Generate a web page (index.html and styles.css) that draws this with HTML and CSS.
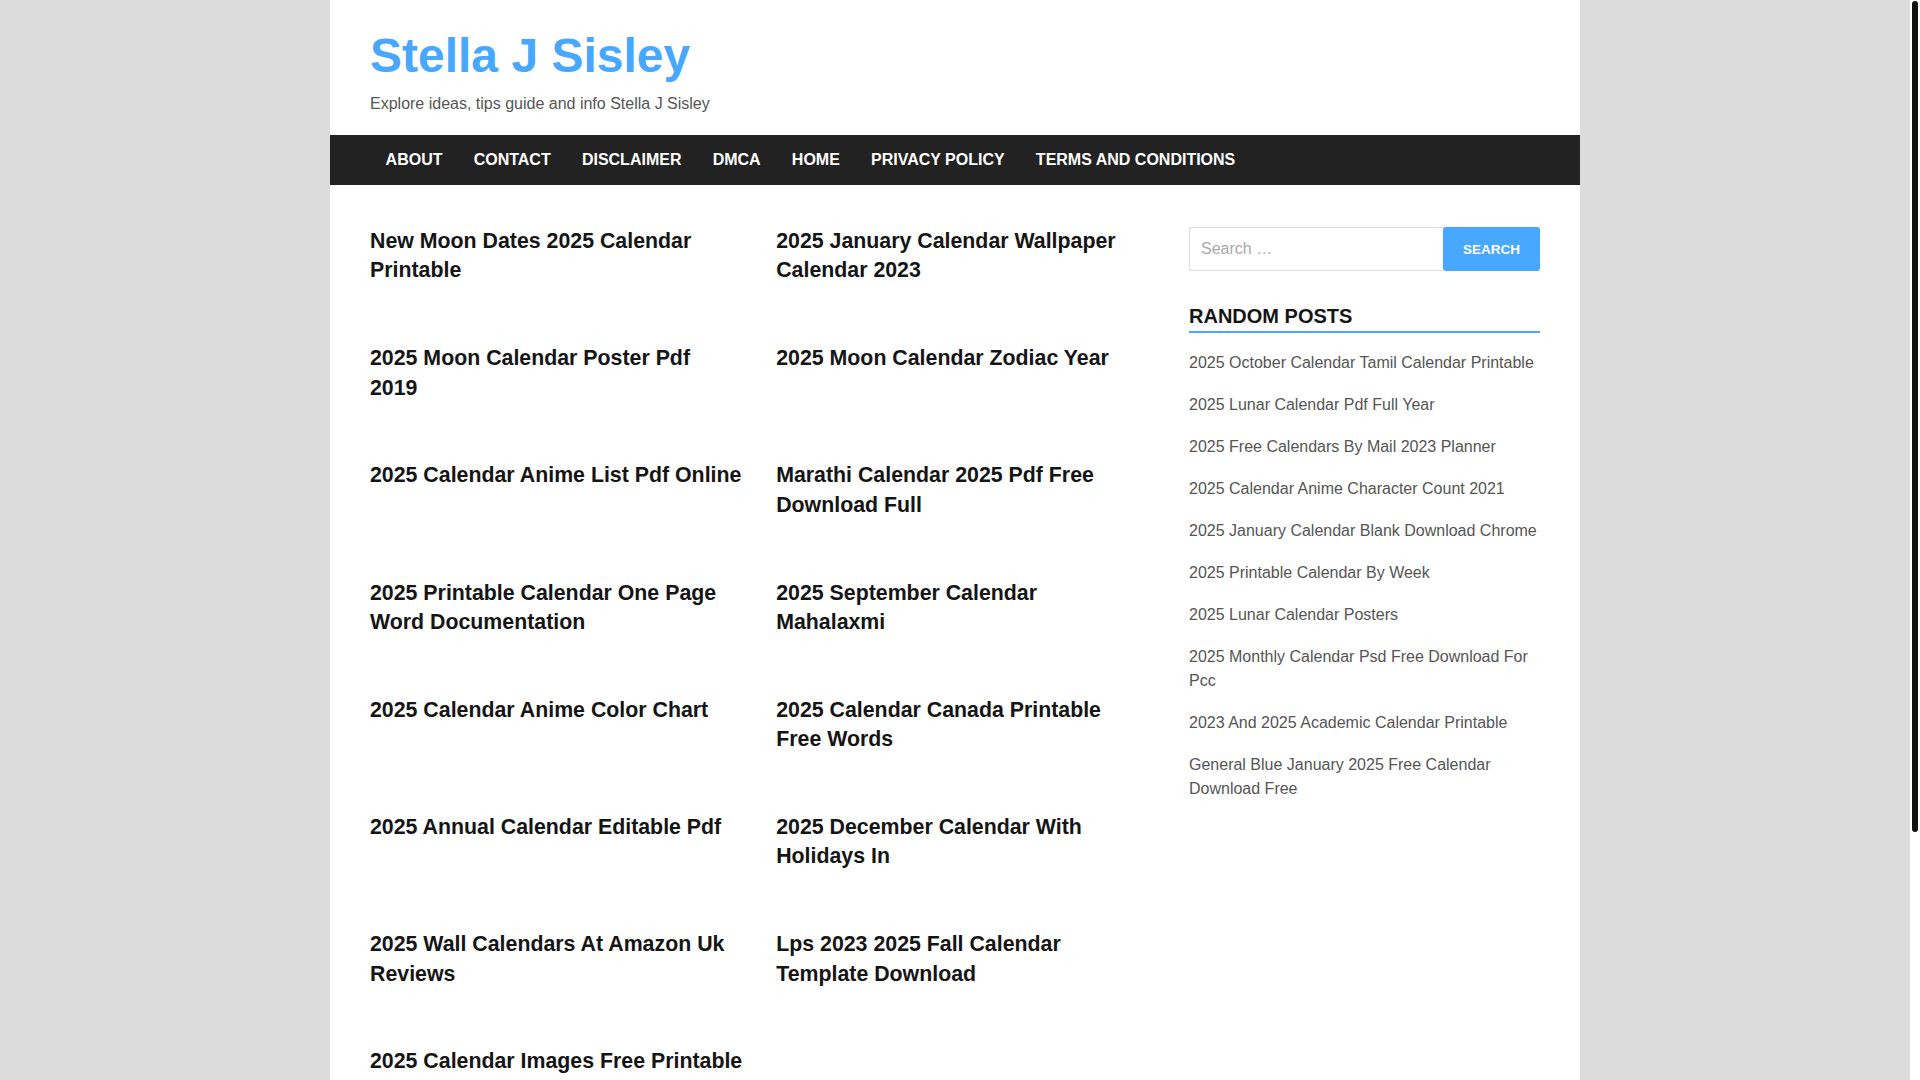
FILE: index.html
```html
<!DOCTYPE html>
<html lang="en">
<head>
<meta charset="utf-8">
<title>Stella J Sisley</title>
<link rel="stylesheet" href="styles.css">
</head>
<body>
<div class="site">
  <header class="site-header">
    <h1 class="site-title">Stella J Sisley</h1>
    <p class="site-desc">Explore ideas, tips guide and info Stella J Sisley</p>
  </header>
  <nav class="main-nav">
    <ul>
      <li><a href="#">About</a></li>
      <li><a href="#">Contact</a></li>
      <li><a href="#">Disclaimer</a></li>
      <li><a href="#">DMCA</a></li>
      <li><a href="#">Home</a></li>
      <li><a href="#">Privacy Policy</a></li>
      <li><a href="#">Terms and Conditions</a></li>
    </ul>
  </nav>
  <div class="content">
    <main class="posts">
      <h2 class="post-title">New Moon Dates 2025 Calendar Printable</h2>
      <h2 class="post-title">2025 January Calendar Wallpaper Calendar 2023</h2>
      <h2 class="post-title">2025 Moon Calendar Poster Pdf 2019</h2>
      <h2 class="post-title">2025 Moon Calendar Zodiac Year</h2>
      <h2 class="post-title">2025 Calendar Anime List Pdf Online</h2>
      <h2 class="post-title">Marathi Calendar 2025 Pdf Free Download Full</h2>
      <h2 class="post-title">2025 Printable Calendar One Page Word Documentation</h2>
      <h2 class="post-title">2025 September Calendar Mahalaxmi</h2>
      <h2 class="post-title">2025 Calendar Anime Color Chart</h2>
      <h2 class="post-title">2025 Calendar Canada Printable Free Words</h2>
      <h2 class="post-title">2025 Annual Calendar Editable Pdf</h2>
      <h2 class="post-title">2025 December Calendar With Holidays In</h2>
      <h2 class="post-title">2025 Wall Calendars At Amazon Uk Reviews</h2>
      <h2 class="post-title">Lps 2023 2025 Fall Calendar Template Download</h2>
      <h2 class="post-title">2025 Calendar Images Free Printable</h2>
    </main>
    <aside class="sidebar">
      <form class="search-form">
        <input class="search-field" type="search" placeholder="Search …">
        <button class="search-submit" type="button">Search</button>
      </form>
      <h3 class="widget-title">Random Posts</h3>
      <ul class="random-list">
        <li><a href="#">2025 October Calendar Tamil Calendar Printable</a></li>
        <li><a href="#">2025 Lunar Calendar Pdf Full Year</a></li>
        <li><a href="#">2025 Free Calendars By Mail 2023 Planner</a></li>
        <li><a href="#">2025 Calendar Anime Character Count 2021</a></li>
        <li><a href="#">2025 January Calendar Blank Download Chrome</a></li>
        <li><a href="#">2025 Printable Calendar By Week</a></li>
        <li><a href="#">2025 Lunar Calendar Posters</a></li>
        <li><a href="#">2025 Monthly Calendar Psd Free Download For Pcc</a></li>
        <li><a href="#">2023 And 2025 Academic Calendar Printable</a></li>
        <li><a href="#">General Blue January 2025 Free Calendar Download Free</a></li>
      </ul>
    </aside>
  </div>
  <footer class="site-footer">
    <p>Copyright © 2025 Stella J Sisley</p>
  </footer>
</div>
<div class="scroll-track"><div class="scroll-thumb"></div></div>
</body>
</html>
```

FILE: styles.css
```css
body {
  margin: 0;
  padding-right: 10px;
  background: #dcdcdc;
  font-family: "Liberation Sans", Arial, sans-serif;
  color: #222;
}
.scroll-track {
  position: fixed;
  top: 0;
  right: 0;
  width: 10px;
  height: 100vh;
  background: #fff;
}
.scroll-thumb {
  margin: 1px 2px 0;
  width: 6px;
  height: 831px;
  border-radius: 3px;
  background: #111;
}
.site {
  width: 1250px;
  margin: 0 auto;
  background: #fff;
}
.site-header {
  padding: 27px 40px 19px;
}
.site-title {
  margin: 0 0 7px;
  font-size: 48px;
  line-height: 58px;
  font-weight: 700;
  color: #48a8ff;
}
.site-desc {
  margin: 0;
  font-size: 16px;
  line-height: 24px;
  color: #555;
}
.main-nav {
  background: #222;
  padding: 0 40px;
}
.main-nav ul {
  display: flex;
  list-style: none;
  margin: 0;
  padding: 0;
}
.main-nav a {
  display: block;
  padding: 0 15.6px;
  line-height: 50px;
  font-size: 16px;
  font-weight: 700;
  text-transform: uppercase;
  color: #fff;
  text-decoration: none;
}
.content {
  display: grid;
  grid-template-columns: 1fr 351px;
  column-gap: 40px;
  padding: 42px 40px 120px;
}
.posts {
  display: grid;
  grid-template-columns: 372.8px 372.8px;
  column-gap: 33.4px;
  row-gap: 58.4px;
  align-content: start;
}
.post-title {
  margin: 0;
  font-size: 21.33px;
  line-height: 29.4px;
  font-weight: 700;
  color: #151515;
}
.search-form {
  display: flex;
  height: 44px;
}
.search-field {
  flex: 1;
  min-width: 0;
  box-sizing: border-box;
  height: 44px;
  margin: 0;
  padding: 0 11px;
  border: 1px solid #ddd;
  border-right: none;
  border-radius: 3px 0 0 3px;
  font-family: "Liberation Sans", Arial, sans-serif;
  font-size: 16px;
  color: #555;
}
.search-field::placeholder {
  color: #a9a9a9;
}
.search-submit {
  width: 97px;
  height: 44px;
  margin: 0;
  border: none;
  border-radius: 3px;
  background: #48a8ff;
  color: #fff;
  font-family: "Liberation Sans", Arial, sans-serif;
  font-size: 13.5px;
  font-weight: 700;
  text-transform: uppercase;
}
.widget-title {
  margin: 32px 0 0;
  padding-bottom: 2px;
  border-bottom: 2px solid #48a8ff;
  font-size: 20px;
  line-height: 26px;
  font-weight: 700;
  text-transform: uppercase;
  color: #151515;
}
.random-list {
  list-style: none;
  margin: 18px 0 0;
  padding: 0;
}
.random-list li {
  margin-bottom: 18px;
  font-size: 16px;
  line-height: 24px;
}
.random-list a {
  color: #555;
  text-decoration: none;
}
.site-footer {
  background: #222;
  padding: 30px 40px;
}
.site-footer p {
  margin: 0;
  font-size: 14px;
  line-height: 20px;
  color: #ccc;
}
```
